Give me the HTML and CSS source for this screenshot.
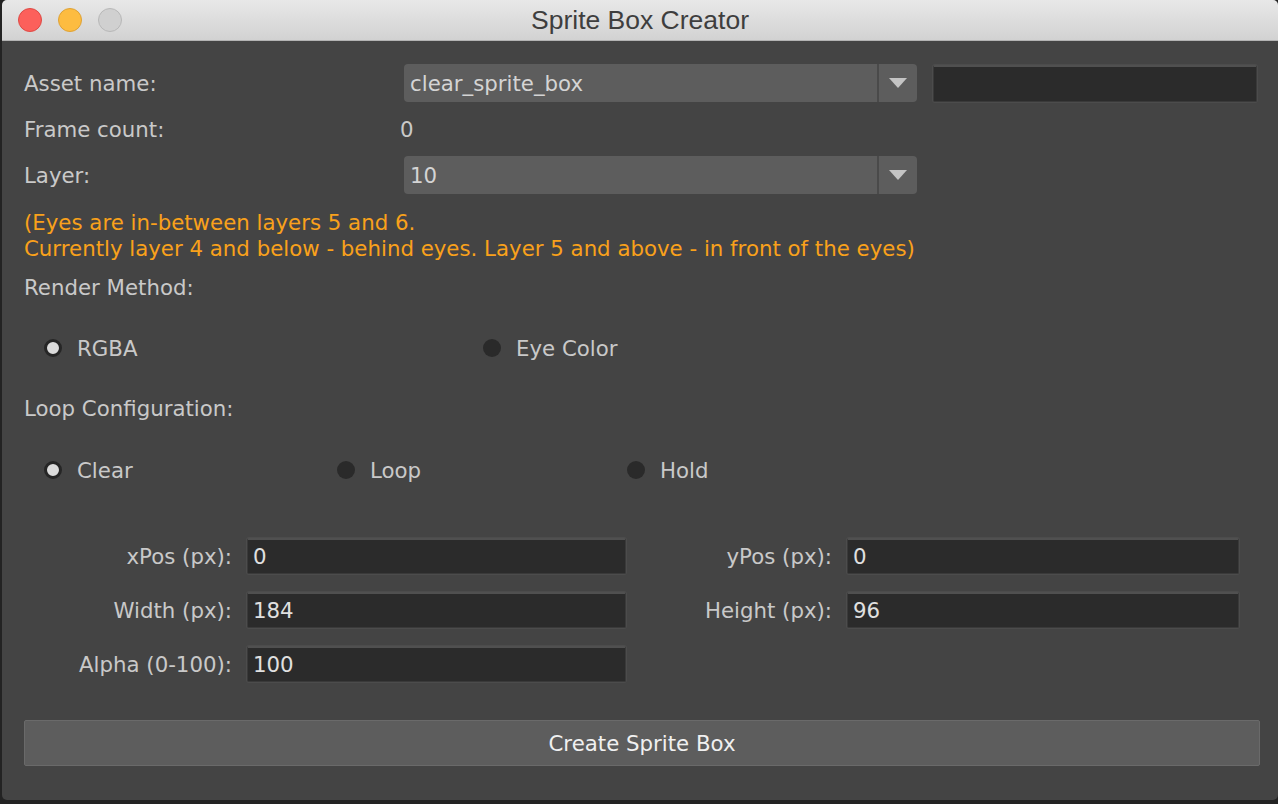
FILE: index.html
```html
<!DOCTYPE html>
<html>
<head>
<meta charset="utf-8">
<link rel="stylesheet" href="styles.css">
</head>
<body>
<div class="window">
  <div class="titlebar">
    <div class="lights">
      <span class="light red"></span>
      <span class="light yellow"></span>
      <span class="light gray"></span>
    </div>
    <div class="title">Sprite Box Creator</div>
  </div>
  <div class="content">
    <div class="row">
      <div class="label">Asset name:</div>
      <div class="combo"><span class="combo-text">clear_sprite_box</span><span class="combo-arrow"><span class="tri"></span></span></div>
      <div class="field wide"></div>
    </div>
    <div class="row">
      <div class="label">Frame count:</div>
      <div class="value">0</div>
    </div>
    <div class="row">
      <div class="label">Layer:</div>
      <div class="combo"><span class="combo-text">10</span><span class="combo-arrow"><span class="tri"></span></span></div>
    </div>
    <div class="note">(Eyes are in-between layers 5 and 6.<br>Currently layer 4 and below - behind eyes. Layer 5 and above - in front of the eyes)</div>
    <div class="section">Render Method:</div>
    <div class="radios render">
      <div class="radio on"><span class="dot"></span>RGBA</div>
      <div class="radio"><span class="dot"></span>Eye Color</div>
    </div>
    <div class="section">Loop Configuration:</div>
    <div class="radios loop">
      <div class="radio on"><span class="dot"></span>Clear</div>
      <div class="radio"><span class="dot"></span>Loop</div>
      <div class="radio"><span class="dot"></span>Hold</div>
    </div>
    <div class="form">
      <div class="flabel">xPos (px):</div>
      <div class="field">0</div>
      <div class="flabel">yPos (px):</div>
      <div class="field">0</div>
      <div class="flabel">Width (px):</div>
      <div class="field">184</div>
      <div class="flabel">Height (px):</div>
      <div class="field">96</div>
      <div class="flabel">Alpha (0-100):</div>
      <div class="field">100</div>
    </div>
    <div class="button">Create Sprite Box</div>
  </div>
</div>
</body>
</html>
```

FILE: styles.css
```css
html, body {
  margin: 0;
  padding: 0;
  background: #232323;
  width: 1278px;
  height: 804px;
  overflow: hidden;
}
.window {
  width: 1276px;
  height: 800px;
  margin-left: 2px;
  background: #444444;
  border-radius: 5px;
  overflow: hidden;
  font-family: "DejaVu Sans", sans-serif;
  color: #c9c9c9;
}
.titlebar {
  height: 40px;
  background: linear-gradient(#e8e8e8, #d2d2d2);
  border-bottom: 1px solid #b3b3b3;
  display: flex;
  align-items: center;
  position: relative;
}
.lights {
  display: flex;
  gap: 16px;
  padding-left: 16px;
}
.light {
  width: 24px;
  height: 24px;
  border-radius: 50%;
  box-sizing: border-box;
}
.red { background: #fc605b; border: 1px solid #de4a45; }
.yellow { background: #fdbc40; border: 1px solid #dea236; }
.gray { background: #d0d0d0; border: 1px solid #b8b8b8; }
.title {
  position: absolute;
  left: 0;
  right: 0;
  top: 4px;
  text-align: center;
  font-family: "Liberation Sans", sans-serif;
  font-size: 26.5px;
  line-height: 32px;
  color: #3e3e3e;
}
.content {
  padding: 23px 18px 0 22px;
  display: flex;
  flex-direction: column;
}
.row {
  display: flex;
  align-items: center;
  height: 38px;
  margin-bottom: 8px;
  font-size: 21.3px;
}
.label {
  width: 380px;
}
.value {
  margin-left: -4px;
}
.combo {
  width: 513px;
  height: 38px;
  box-sizing: border-box;
  background: #5d5d5d;
  border-radius: 4px;
  display: flex;
  align-items: center;
  color: #d4d4d4;
}
.combo-text {
  flex: 1;
  padding-left: 6px;
}
.combo-arrow {
  width: 38px;
  height: 100%;
  border-left: 2px solid #4a4a4a;
  display: flex;
  align-items: center;
  justify-content: center;
}
.tri {
  width: 0;
  height: 0;
  border-left: 9px solid transparent;
  border-right: 9px solid transparent;
  border-top: 10px solid #c4c4c4;
}
.field {
  height: 36px;
  box-sizing: border-box;
  background: #2b2b2b;
  border: 1px solid #3a3a3a;
  border-top: 2px solid #505050;
  box-shadow: 0 0 0 1px #4c4c4c;
  border-radius: 2px;
  color: #e0e0e0;
  font-size: 21.3px;
  padding-left: 5px;
  display: flex;
  align-items: center;
}
.field.wide {
  width: 324px;
  margin-left: 16px;
  height: 37px;
}
.note {
  color: #f9a11b;
  font-size: 21.3px;
  line-height: 26px;
  margin-top: 8px;
}
.section {
  font-size: 21.3px;
  line-height: 26px;
  margin-top: 13px;
}
.radios {
  display: flex;
  height: 26px;
  align-items: center;
  padding-left: 20px;
  margin-top: 34px;
  margin-bottom: 35px;
  font-size: 21.3px;
}
.radio {
  display: flex;
  align-items: center;
  gap: 15px;
}
.render .radio:first-child { width: 439px; }
.loop .radio:nth-child(1) { width: 293px; }
.loop .radio:nth-child(2) { width: 290px; }
.dot {
  width: 18px;
  height: 18px;
  box-sizing: border-box;
  border-radius: 50%;
  background: #2a2a2a;
}
.radio.on .dot {
  background: #dcdcdc;
  border: 3px solid #262626;
}
.loop { margin-bottom: 55px; margin-top: 35px; }
.render + .section { margin-top: 0; }
.form {
  display: grid;
  grid-template-columns: 208px 379px 191px 392px;
  column-gap: 15px;
  row-gap: 18px;
  align-items: center;
}
.flabel {
  text-align: right;
  font-size: 21.3px;
}
.button {
  margin-top: 38px;
  width: 1236px;
  height: 46px;
  box-sizing: border-box;
  background: #5d5d5d;
  border: 1px solid #6a6a6a;
  border-radius: 2px;
  display: flex;
  align-items: center;
  justify-content: center;
  font-size: 21.3px;
  color: #f0f0f0;
}
```
